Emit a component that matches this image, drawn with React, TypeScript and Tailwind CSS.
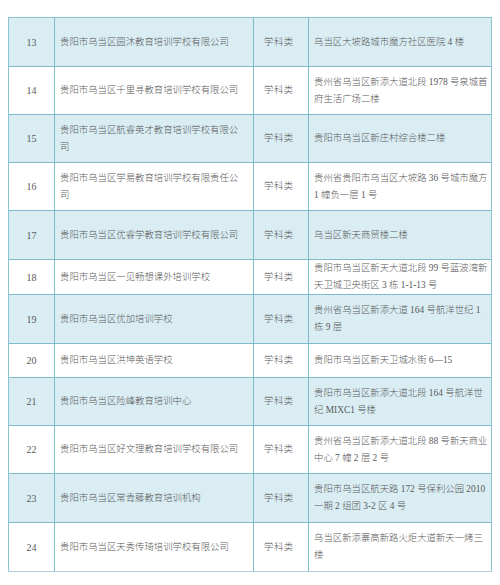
type Row = {
  no: string
  name: string[]
  addr: string[]
  h: string
  blue: boolean
}

const rows: Row[] = [
  { no: '13', name: ['贵阳市乌当区圆沐教育培训学校有限公司'], addr: ['乌当区大坡路城市魔方社区医院 4 楼'], h: 'h-[49px]', blue: true },
  { no: '14', name: ['贵阳市乌当区千里寻教育培训学校有限公司'], addr: ['贵州省乌当区新添大道北段 1978 号泉城首', '府生活广场二楼'], h: 'h-[48px]', blue: false },
  { no: '15', name: ['贵阳市乌当区航睿英才教育培训学校有限公', '司'], addr: ['贵阳市乌当区新庄村综合楼二楼'], h: 'h-[48px]', blue: true },
  { no: '16', name: ['贵阳市乌当区学易教育培训学校有限责任公', '司'], addr: ['贵州省贵阳市乌当区大坡路 36 号城市魔方', '1 幢负一层 1 号'], h: 'h-[48px]', blue: false },
  { no: '17', name: ['贵阳市乌当区优睿学教育培训学校有限公司'], addr: ['乌当区新天商贸楼二楼'], h: 'h-[49px]', blue: true },
  { no: '18', name: ['贵阳市乌当区一见畅想课外培训学校'], addr: ['贵阳市乌当区新天大道北段 99 号蓝波湾新', '天卫城卫央街区 3 栋 1-1-13 号'], h: 'h-[35px]', blue: false },
  { no: '19', name: ['贵阳市乌当区优加培训学校'], addr: ['贵州省乌当区新添大道 164 号航洋世纪 1', '栋 9 层'], h: 'h-[49px]', blue: true },
  { no: '20', name: ['贵阳市乌当区洪坤英语学校'], addr: ['贵阳市乌当区新天卫城水街 6—15'], h: 'h-[34px]', blue: false },
  { no: '21', name: ['贵阳市乌当区险峰教育培训中心'], addr: ['贵阳市乌当区新添大道北段 164 号航洋世', '纪 MIXC1 号楼'], h: 'h-[48px]', blue: true },
  { no: '22', name: ['贵阳市乌当区好文理教育培训学校有限公司'], addr: ['贵州省乌当区新添大道北段 88 号新天商业', '中心 7 幢 2 层 2 号'], h: 'h-[48px]', blue: false },
  { no: '23', name: ['贵阳市乌当区常青藤教育培训机构'], addr: ['贵阳市乌当区航天路 172 号保利公园 2010', '一期 2 组团 3-2 区 4 号'], h: 'h-[49px]', blue: true },
  { no: '24', name: ['贵阳市乌当区天秀传琦培训学校有限公司'], addr: ['乌当区新添寨高新路火炬大道新天一烤三', '楼'], h: 'h-[48px]', blue: false },
]

function Lines({ lines }: { lines: string[] }) {
  return (
    <div className="flex flex-col">
      {lines.map((l, i) => (
        <span key={i} className="whitespace-nowrap">
          {l}
        </span>
      ))}
    </div>
  )
}

export default function App() {
  return (
    <div className="w-[500px] h-[585px] bg-white pt-[17px] pl-[8px] font-['Liberation_Serif','Noto_Sans_CJK_SC',serif] text-[9.4px] leading-[17px] text-[#5a5a5a] font-light">
      <div className="w-[484px] border border-[#8cc3d0] border-b-[#a9d0da]">
        {rows.map((r, idx) => (
          <div
            key={r.no}
            className={`grid grid-cols-[46px_199px_55px_183px] ${r.h} ${r.blue ? 'bg-[#d9edf3]' : 'bg-white'} ${idx < rows.length - 1 ? 'border-b border-[#7fbccb]' : ''}`}
          >
            <div className="flex items-center justify-center border-r border-[#7fbccb] text-[10px]">
              {r.no}
            </div>
            <div className="flex items-center pl-[5px] border-r border-[#7fbccb]">
              <Lines lines={r.name} />
            </div>
            <div className="flex items-center pl-[10px] border-r border-[#7fbccb] tracking-[0.5px]">学科类</div>
            <div className="flex items-center pl-[5px]">
              <Lines lines={r.addr} />
            </div>
          </div>
        ))}
      </div>
    </div>
  )
}
